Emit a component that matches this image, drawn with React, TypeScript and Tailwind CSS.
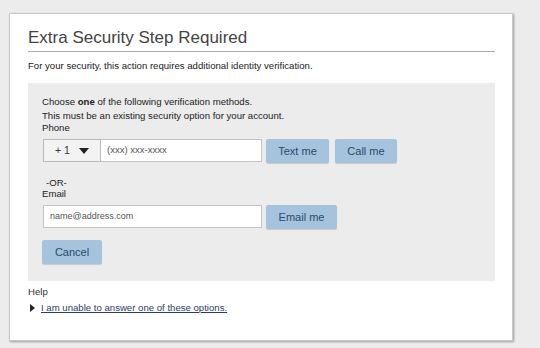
export default function App() {
  const font = { fontFamily: '"Liberation Sans", Arial, sans-serif' };
  const btn =
    "h-[24px] bg-[#a5c3dc] rounded-[2px] text-[11px] text-[#294a6d] shadow-[0_1px_1px_rgba(0,0,0,0.15)]";
  return (
    <div className="w-[540px] h-[348px] bg-[#ececec] pt-[13px] pl-[9px]" style={font}>
      <div className="w-[504px] h-[328px] bg-white border border-[#c9c9c9] shadow-[1px_1px_2px_rgba(0,0,0,0.35)] pl-[18px] pr-[17px] pt-[14px]">
        {/* title */}
        <div className="border-b border-[#a9a9a9] pb-[3px]">
          <h1 className="text-[17px] leading-[20px] text-[#444444]">Extra Security Step Required</h1>
        </div>
        <p className="mt-[7px] text-[9.6px] leading-[14px] text-[#222222]">
          For your security, this action requires additional identity verification.
        </p>

        {/* options panel */}
        <div className="mt-[10px] bg-[#ececec] pl-[14px] pt-[12px] pb-[17px] text-[9.6px] text-[#222222]">
          <div className="leading-[14px]">
            Choose <b>one</b> of the following verification methods.
          </div>
          <div className="leading-[14px]">This must be an existing security option for your account.</div>
          <div className="leading-[10px]">Phone</div>

          <div className="mt-[6px] flex items-start pl-px">
            <div className="w-[58px] h-[23px] border border-[#b9b9b9] bg-[#f3f3f3] flex items-center justify-center gap-[9px] text-[10.5px] text-[#333]">
              <span>+ 1</span>
              <svg width="10" height="6" viewBox="0 0 10 6">
                <path d="M0 0 L10 0 L5 6 Z" fill="#222" />
              </svg>
            </div>
            <div className="w-[161px] h-[23px] bg-white border border-[#c4c4c4] border-l-0 flex items-center pl-[6px] text-[9.5px] text-[#555]">
              (xxx) xxx-xxxx
            </div>
            <button className={`ml-[4px] w-[63px] ${btn}`}>Text me</button>
            <button className={`ml-[6px] w-[62px] ${btn}`}>Call me</button>
          </div>

          <div className="mt-[14px] pl-[4px] leading-[12px]">-OR-</div>
          <div className="leading-[10px]">Email</div>

          <div className="mt-[6px] flex items-start pl-px">
            <div className="w-[219px] h-[23px] bg-white border border-[#c4c4c4] flex items-center pl-[6px] text-[9px] text-[#555]">
              name@address.com
            </div>
            <button className={`ml-[4px] w-[71px] ${btn}`}>Email me</button>
          </div>

          <button className={`mt-[11px] w-[60px] ${btn}`}>Cancel</button>
        </div>

        {/* help */}
        <div className="mt-[4px] text-[9.6px] leading-[14px] text-[#333]">Help</div>
        <div className="mt-[2px] flex items-center gap-[6px] pl-[2px] text-[9.6px] leading-[14px]">
          <svg width="5" height="8" viewBox="0 0 5 8">
            <path d="M0 0 L5 4 L0 8 Z" fill="#222" />
          </svg>
          <a className="underline text-[#2b3d6b]">I am unable to answer one of these options.</a>
        </div>
      </div>
    </div>
  );
}
